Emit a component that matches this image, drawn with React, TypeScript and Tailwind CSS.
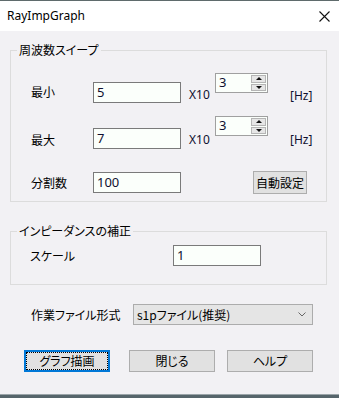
import { ReactNode } from "react";

const jp = "font-['Noto_Sans_CJK_JP',sans-serif] [font-feature-settings:'palt']";
const latin = "font-['Noto_Sans','Noto_Sans_CJK_JP',sans-serif]";

function TextBox({ value, className = "" }: { value: string; className?: string }) {
  return (
    <div
      className={`h-[21px] border border-[#7a7a7a] bg-[#fbfffb] pl-[3px] text-[13px] leading-[19px] text-[#101030] ${latin} ${className}`}
    >
      {value}
    </div>
  );
}

function Spinner({ value }: { value: string }) {
  return (
    <div className="flex h-[20px] w-[53px] border border-[#a0a0a0] bg-[#fbfffb]">
      <div className={`flex-1 pl-[3px] text-[13px] leading-[17px] text-[#101030] ${latin}`}>{value}</div>
      <div className="flex w-[16px] flex-col gap-[1px] py-[1px] pr-[1px]">
        <div className="flex flex-1 items-center justify-center border border-[#b5b5b5] bg-[#e6e6e6]">
          <svg width="6" height="3" viewBox="0 0 6 3">
            <path d="M3 0 L6 3 L0 3 Z" fill="#111" />
          </svg>
        </div>
        <div className="flex flex-1 items-center justify-center border border-[#b5b5b5] bg-[#e6e6e6]">
          <svg width="6" height="3" viewBox="0 0 6 3">
            <path d="M0 0 L6 0 L3 3 Z" fill="#111" />
          </svg>
        </div>
      </div>
    </div>
  );
}

function Group({ title, children, className = "" }: { title: string; children: ReactNode; className?: string }) {
  return (
    <fieldset className={`ml-[10px] w-[317px] border border-[#dcdcdc] ${className}`}>
      <legend className={`ml-[6px] px-[2px] text-[12px] leading-[14px] text-black ${jp}`}>{title}</legend>
      {children}
    </fieldset>
  );
}

function Btn({ label, focused = false }: { label: string; focused?: boolean }) {
  return (
    <div
      className={`flex h-[22px] w-[86px] items-center justify-center bg-[#e1e1e1] text-[12px] text-black ${jp} ${
        focused ? "border-2 border-[#0078d7]" : "border border-[#adadad]"
      }`}
    >
      {focused ? (
        <div className="flex h-full w-full items-center justify-center border border-dotted border-black">{label}</div>
      ) : (
        label
      )}
    </div>
  );
}

// offsets: [label, input, x10, hz] top margins relative to spinner top
function FreqRow({
  label,
  value,
  offs,
  className = "",
}: {
  label: string;
  value: string;
  offs: [string, string, string, string];
  className?: string;
}) {
  return (
    <div className={`flex items-start ${className}`}>
      <div className={`ml-[20px] w-[62px] text-[12px] leading-[14px] ${jp} ${offs[0]}`}>{label}</div>
      <TextBox value={value} className={`w-[88px] ${offs[1]}`} />
      <div className={`ml-[8px] w-[26px] text-[12px] leading-[14px] text-[#101030] ${latin} ${offs[2]}`}>X10</div>
      <Spinner value="3" />
      <div className={`ml-[22px] text-[12px] leading-[14px] text-[#101030] ${latin} ${offs[3]}`}>[Hz]</div>
    </div>
  );
}

export default function App() {
  return (
    <div className="flex h-[398px] w-[339px] flex-col overflow-hidden bg-[#f2f1f4]">
      {/* title bar */}
      <div className="flex h-[31px] items-center justify-between border-t border-[#5f6b6c] bg-white pl-[7px] pr-[9px]">
        <span className={`text-[12px] text-black ${latin}`}>RayImpGraph</span>
        <svg width="11" height="11" viewBox="0 0 11 11">
          <path d="M0.5 0.5 L10.5 10.5 M10.5 0.5 L0.5 10.5" stroke="#111" strokeWidth="1.1" />
        </svg>
      </div>

      <Group title="周波数スイープ" className="mt-[12px] pb-[7px]">
        <FreqRow label="最小" value="5" offs={["mt-[12px]", "mt-[9px]", "mt-[15px]", "mt-[16px]"]} className="mt-[16px]" />
        <FreqRow label="最大" value="7" offs={["mt-[17px]", "mt-[12px]", "mt-[17px]", "mt-[17px]"]} className="mt-[13px]" />
        <div className="mt-[22px] flex items-start">
          <div className={`ml-[20px] mt-[5px] w-[62px] text-[12px] leading-[14px] ${jp}`}>分割数</div>
          <TextBox value="100" className="mt-[1px] w-[88px]" />
          <div
            className={`ml-[72px] flex h-[23px] w-[54px] items-center justify-center border border-[#adadad] bg-[#e1e1e1] text-[12px] ${jp}`}
          >
            自動設定
          </div>
        </div>
      </Group>

      <Group title="インピーダンスの補正" className="mt-[22px] pb-[18px]">
        <div className="mt-[7px] flex items-center">
          <div className={`ml-[19px] w-[143px] text-[12px] leading-[14px] ${jp}`}>スケール</div>
          <TextBox value="1" className="w-[88px]" />
        </div>
      </Group>

      <div className="mt-[19px] flex items-center">
        <div className={`ml-[31px] w-[102px] text-[12px] leading-[14px] ${jp}`}>作業ファイル形式</div>
        <div className="flex h-[21px] w-[180px] items-center justify-between border border-[#acacac] bg-[#e5e5e5] pl-[3px] pr-[6px]">
          <span className={`text-[12px] text-black ${jp}`}>s1pファイル(推奨)</span>
          <svg width="8" height="5" viewBox="0 0 8 5">
            <path d="M0.5 0.5 L4 4 L7.5 0.5" stroke="#666" fill="none" strokeWidth="1" />
          </svg>
        </div>
      </div>

      <div className="mt-[25px] flex">
        <div className="ml-[24px]">
          <Btn label="グラフ描画" focused />
        </div>
        <div className="ml-[19px]">
          <Btn label="閉じる" />
        </div>
        <div className="ml-[12px]">
          <Btn label="ヘルプ" />
        </div>
      </div>

      <div className="mt-auto h-[4px] border-t border-[#9aa4a8] bg-[#56656b]" />
    </div>
  );
}
